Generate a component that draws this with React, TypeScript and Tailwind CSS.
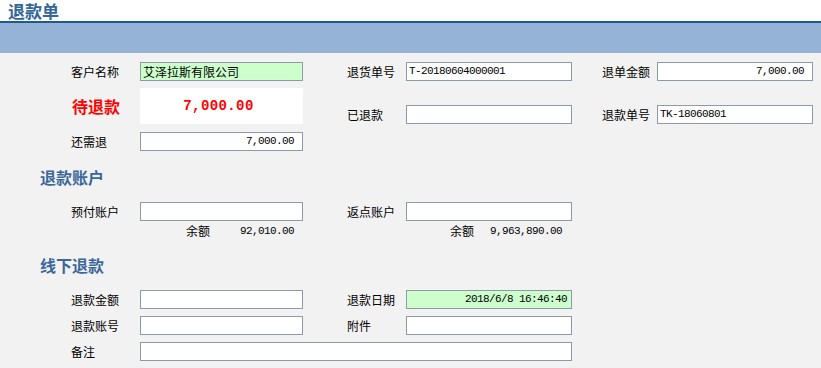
import React from "react";

const cjk = { fontFamily: '"Noto Sans CJK SC", "Noto Sans", sans-serif' };
const mono = { fontFamily: '"Liberation Mono", "Noto Sans CJK SC", monospace' };

function Label({ w, children }: { w: string; children: React.ReactNode }) {
  return (
    <div className={`${w} shrink-0 text-[12px] leading-[19px] text-black`} style={cjk}>
      {children}
    </div>
  );
}

function Input({
  w,
  value,
  green,
  right,
  cjkText,
  pr,
}: {
  w: string;
  value?: string;
  green?: boolean;
  right?: boolean;
  cjkText?: boolean;
  pr?: string;
}) {
  return (
    <div
      className={`${w} h-[19px] shrink-0 border border-[#8e9aa8] ${green ? "bg-[#ccffcc]" : "bg-white"} flex items-center ${
        right ? `justify-end ${pr ?? "pr-[8px]"}` : "pl-[2px]"
      } overflow-hidden whitespace-nowrap`}
    >
      {value ? (
        cjkText ? (
          <span className="text-[12px] leading-none text-black" style={cjk}>
            {value}
          </span>
        ) : (
          <span className="text-[11px] leading-none tracking-[-0.6px] text-black" style={mono}>
            {value}
          </span>
        )
      ) : null}
    </div>
  );
}

function Heading({ children }: { children: React.ReactNode }) {
  return (
    <div className="pl-[40px] h-[20px] text-[16px] leading-[20px] font-bold text-[#3b679a]" style={cjk}>
      {children}
    </div>
  );
}

export default function App() {
  return (
    <div className="w-[821px] h-[368px] bg-[#f2f2f2] overflow-hidden">
      <div className="h-[21px] bg-white pl-[8px] pt-[2px]">
        <div className="text-[17px] leading-[18px] font-bold text-[#336699]" style={cjk}>
          退款单
        </div>
      </div>
      <div className="h-[2px] bg-[#1f5a8f]" />
      <div className="h-[30px] bg-[#95b3d7]" />

      <div className="pl-[71px]">
        {/* Row 1 */}
        <div className="mt-[9px] flex items-center">
          <Label w="w-[69px]">客户名称</Label>
          <Input w="w-[163px]" value="艾泽拉斯有限公司" green cjkText />
          <div className="w-[44px] shrink-0" />
          <Label w="w-[59px]">退货单号</Label>
          <Input w="w-[166px]" value="T-20180604000001" />
          <div className="w-[30px] shrink-0" />
          <Label w="w-[55px]">退单金额</Label>
          <Input w="w-[156px]" value="7,000.00" right />
        </div>

        {/* Row 2 */}
        <div className="mt-[7px] flex items-end">
          <div className="flex items-center">
            <div className="w-[69px] shrink-0 text-[16px] font-bold text-[#ff0000] leading-[20px] pl-[1px]" style={cjk}>
              待退款
            </div>
            <div className="w-[163px] h-[36px] bg-white flex items-center justify-center pr-[6px]">
              <span className="text-[14px] font-bold text-[#ff0000] tracking-[0.4px]" style={mono}>
                7,000.00
              </span>
            </div>
          </div>
          <div className="w-[44px] shrink-0" />
          <div className="flex items-center">
            <Label w="w-[59px]">已退款</Label>
            <Input w="w-[166px]" />
            <div className="w-[30px] shrink-0" />
            <Label w="w-[55px]">退款单号</Label>
            <Input w="w-[156px]" value="TK-18060801" />
          </div>
        </div>

        {/* Row 3 */}
        <div className="mt-[8px] flex items-center">
          <Label w="w-[69px]">还需退</Label>
          <Input w="w-[163px]" value="7,000.00" right />
        </div>
      </div>

      <div className="mt-[16px]">
        <Heading>退款账户</Heading>
      </div>

      <div className="pl-[71px]">
        <div className="mt-[15px] flex items-center">
          <Label w="w-[69px]">预付账户</Label>
          <Input w="w-[163px]" />
          <div className="w-[44px] shrink-0" />
          <Label w="w-[59px]">返点账户</Label>
          <Input w="w-[166px]" />
        </div>
        <div className="mt-[2px] flex items-center h-[16px]">
          <div className="w-[69px] shrink-0" />
          <div className="w-[163px] shrink-0 flex items-center">
            <span className="ml-[46px] text-[12px] text-black" style={cjk}>
              余额
            </span>
            <span className="ml-auto mr-[9px] text-[11px] tracking-[-0.6px] text-black" style={mono}>
              92,010.00
            </span>
          </div>
          <div className="w-[44px] shrink-0" />
          <div className="w-[59px] shrink-0" />
          <div className="w-[166px] shrink-0 flex items-center">
            <span className="ml-[44px] text-[12px] text-black" style={cjk}>
              余额
            </span>
            <span className="ml-auto mr-[10px] text-[11px] tracking-[-0.6px] text-black" style={mono}>
              9,963,890.00
            </span>
          </div>
        </div>
      </div>

      <div className="mt-[16px]">
        <Heading>线下退款</Heading>
      </div>

      <div className="pl-[71px]">
        <div className="mt-[15px] flex items-center">
          <Label w="w-[69px]">退款金额</Label>
          <Input w="w-[163px]" />
          <div className="w-[44px] shrink-0" />
          <Label w="w-[59px]">退款日期</Label>
          <Input w="w-[166px]" value="2018/6/8 16:46:40" green right pr="pr-[4px]" />
        </div>
        <div className="mt-[7px] flex items-center">
          <Label w="w-[69px]">退款账号</Label>
          <Input w="w-[163px]" />
          <div className="w-[44px] shrink-0" />
          <Label w="w-[59px]">附件</Label>
          <Input w="w-[166px]" />
        </div>
        <div className="mt-[7px] flex items-center">
          <Label w="w-[69px]">备注</Label>
          <Input w="w-[432px]" />
        </div>
      </div>
    </div>
  );
}
